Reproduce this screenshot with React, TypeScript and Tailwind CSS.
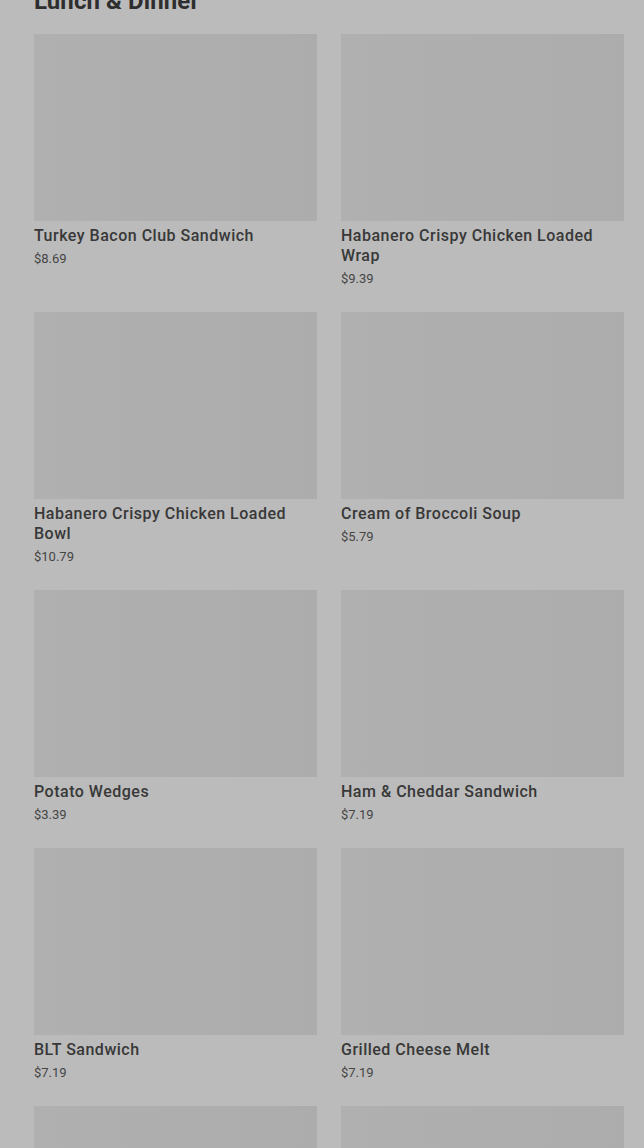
import React from 'react';

type Item = { name: string; price: string };

const ITEMS: Item[] = [
  { name: 'Turkey Bacon Club Sandwich', price: '$8.69' },
  { name: 'Habanero Crispy Chicken Loaded Wrap', price: '$9.39' },
  { name: 'Habanero Crispy Chicken Loaded Bowl', price: '$10.79' },
  { name: 'Cream of Broccoli Soup', price: '$5.79' },
  { name: 'Potato Wedges', price: '$3.39' },
  { name: 'Ham & Cheddar Sandwich', price: '$7.19' },
  { name: 'BLT Sandwich', price: '$7.19' },
  { name: 'Grilled Cheese Melt', price: '$7.19' },
  { name: 'Chicken Caesar Wrap', price: '$8.49' },
  { name: 'Chili', price: '$5.79' },
];

function MenuCard({ item }: { item: Item }) {
  return (
    <div className="flex flex-col">
      <div className="h-[187px] w-full bg-gradient-to-r from-[#b0b0b0] to-[#acacac]" />
      <div className="mt-[5px] text-[16px] leading-[20px] font-medium tracking-[0.5px] text-[#383838]">{item.name}</div>
      <div className="mt-[4px] text-[13px] leading-[18px] text-[#454545]">{item.price}</div>
    </div>
  );
}

export default function App() {
  return (
    <div className="min-h-screen bg-[#bbbbbb] pl-[34px] pr-[20px] overflow-hidden" style={{ fontFamily: 'Roboto, "Noto Sans", sans-serif' }}>
      {/* Section heading, scrolled partly out of view */}
      <h2 className="-mt-[13px] mb-[19px] text-[24px] leading-[28px] font-bold tracking-[0.1px] text-[#2e2e2e]">
        Lunch &amp; Dinner
      </h2>

      <div className="grid grid-cols-2 gap-x-[24px] gap-y-[24px]">
        {ITEMS.map((item) => (
          <MenuCard key={item.name} item={item} />
        ))}
      </div>
    </div>
  );
}
